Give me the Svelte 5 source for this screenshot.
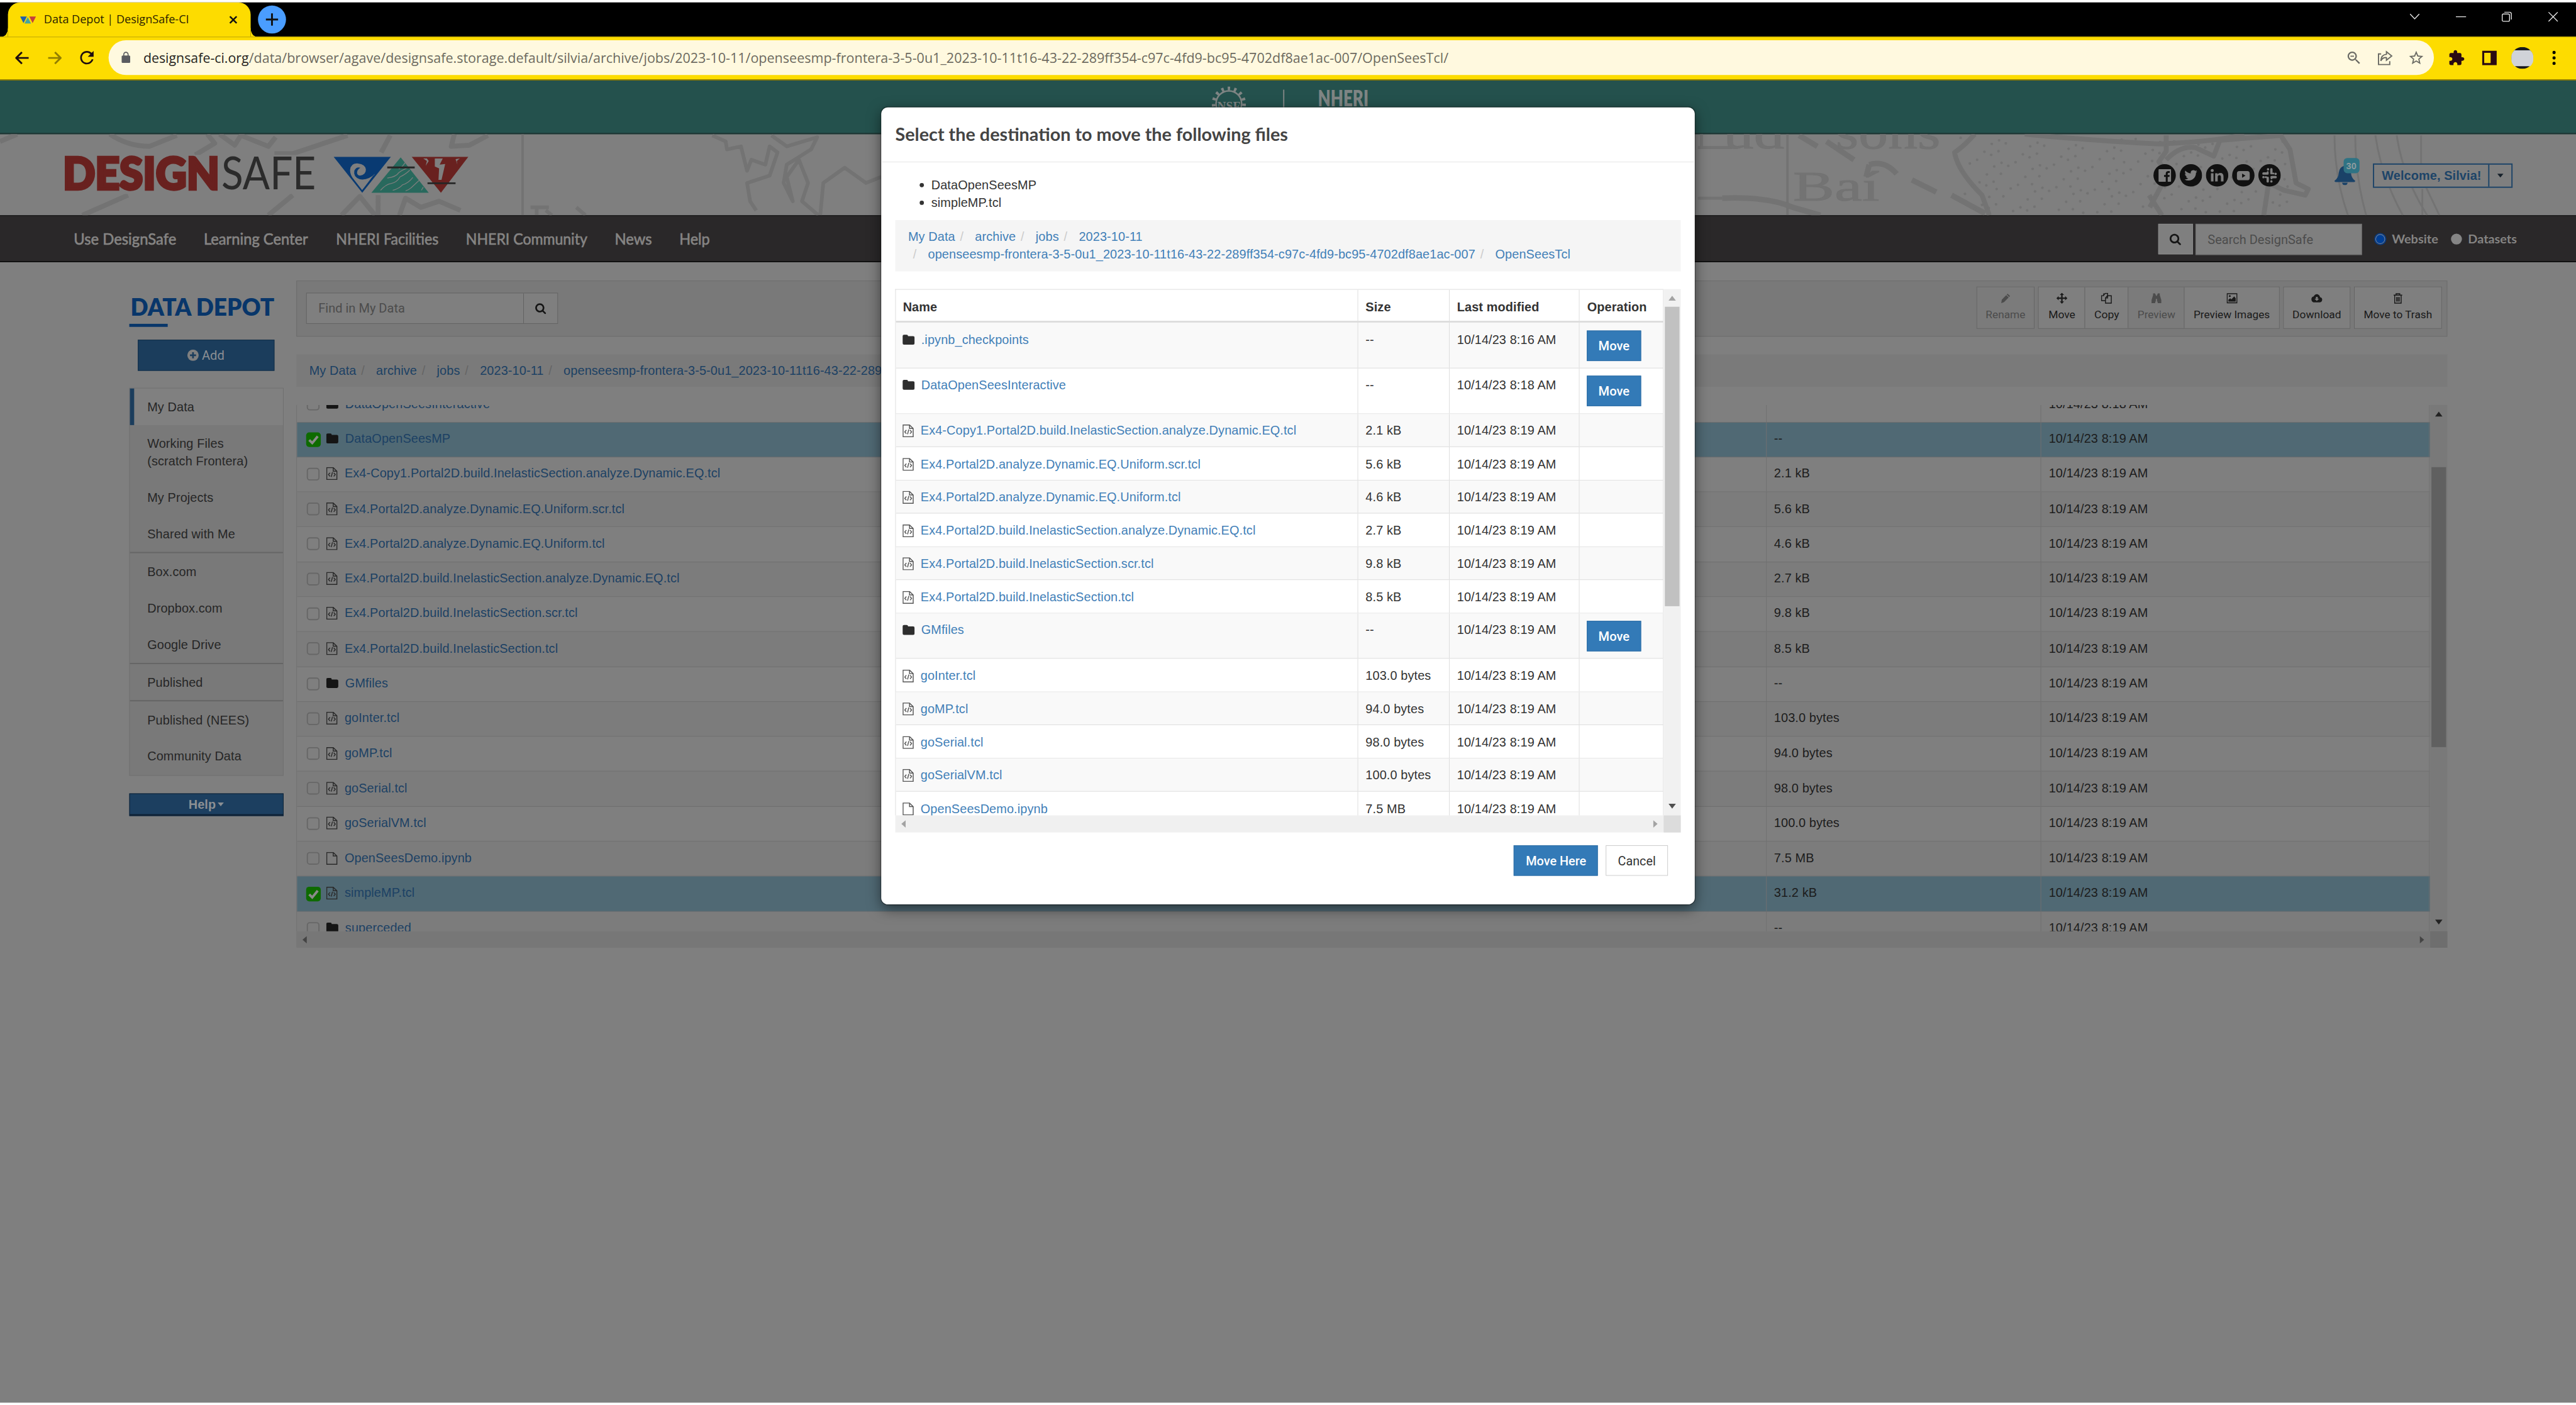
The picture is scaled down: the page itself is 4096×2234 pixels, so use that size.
<script>
  const T19 = '10/14/23 8:19 AM';
  const navItems = [
    ['Use DesignSafe', 168],
    ['Learning Center', 171],
    ['NHERI Facilities', 168],
    ['NHERI Community', 199],
    ['News', 61],
    ['Help', 50]
  ];
  const social = ['facebook', 'twitter', 'linkedin', 'youtube', 'slack'];
  const sideGroups = [
    ['My Data', 'Working Files (scratch Frontera)', 'My Projects', 'Shared with Me'],
    ['Box.com', 'Dropbox.com', 'Google Drive'],
    ['Published'],
    ['Published (NEES)', 'Community Data']
  ];
  const toolGroups = [
    [{ label: 'Rename', icon: 'pencil', w: 93, t: 65, off: true }],
    [
      { label: 'Move', icon: 'arrows', w: 75, t: 44 },
      { label: 'Copy', icon: 'copy', w: 71, t: 41 },
      { label: 'Preview', icon: 'binoculars', w: 92, t: 62, off: true },
      { label: 'Preview Images', icon: 'image', w: 156, t: 125 }
    ],
    [{ label: 'Download', icon: 'cloud', w: 108, t: 80 }],
    [{ label: 'Move to Trash', icon: 'trash', w: 142, t: 112 }]
  ];
  const job = 'openseesmp-frontera-3-5-0u1_2023-10-11t16-43-22-289ff354-c97c-4fd9-bc95-4702df8ae1ac-007';
  const crumbs = ['My Data', 'archive', 'jobs', '2023-10-11'];
  const files = [
    { name: 'DataOpenSeesInteractive', size: '--', date: '10/14/23 8:18 AM', kind: 'dir' },
    { name: 'DataOpenSeesMP', size: '--', date: T19, kind: 'dir', sel: true },
    { name: 'Ex4-Copy1.Portal2D.build.InelasticSection.analyze.Dynamic.EQ.tcl', size: '2.1 kB', date: T19, kind: 'code' },
    { name: 'Ex4.Portal2D.analyze.Dynamic.EQ.Uniform.scr.tcl', size: '5.6 kB', date: T19, kind: 'code' },
    { name: 'Ex4.Portal2D.analyze.Dynamic.EQ.Uniform.tcl', size: '4.6 kB', date: T19, kind: 'code' },
    { name: 'Ex4.Portal2D.build.InelasticSection.analyze.Dynamic.EQ.tcl', size: '2.7 kB', date: T19, kind: 'code' },
    { name: 'Ex4.Portal2D.build.InelasticSection.scr.tcl', size: '9.8 kB', date: T19, kind: 'code' },
    { name: 'Ex4.Portal2D.build.InelasticSection.tcl', size: '8.5 kB', date: T19, kind: 'code' },
    { name: 'GMfiles', size: '--', date: T19, kind: 'dir' },
    { name: 'goInter.tcl', size: '103.0 bytes', date: T19, kind: 'code' },
    { name: 'goMP.tcl', size: '94.0 bytes', date: T19, kind: 'code' },
    { name: 'goSerial.tcl', size: '98.0 bytes', date: T19, kind: 'code' },
    { name: 'goSerialVM.tcl', size: '100.0 bytes', date: T19, kind: 'code' },
    { name: 'OpenSeesDemo.ipynb', size: '7.5 MB', date: T19, kind: 'file' },
    { name: 'simpleMP.tcl', size: '31.2 kB', date: T19, kind: 'code', sel: true },
    { name: 'superceded', size: '--', date: T19, kind: 'dir' }
  ];
  const modalFiles = [
    { name: '.ipynb_checkpoints', size: '--', date: '10/14/23 8:16 AM', kind: 'dir' },
    ...files.slice(0, 14).filter((f) => !f.sel)
  ];
  const dots = Array.from({ length: 190 }, (_, i) => ({
    x: 3215 + ((i * 67) % 540),
    y: 226 + ((i * 41 + Math.floor(i / 9) * 7) % 124)
  }));
</script>

{#snippet fit(text, w, size, cls = '')}
  <svg class="fit {cls}" width={w} height={size * 1.4}>
    <text x="0" y={size * 1.05} font-size={size} textLength={w} lengthAdjust="spacingAndGlyphs">{text}</text>
  </svg>
{/snippet}

{#snippet fileIcon(kind)}
  {#if kind === 'dir'}
    <svg class="ficon dir" width="20" height="21" viewBox="0 0 20 21">
      <path d="M0 4.2Q0 1.8 2.4 1.8H6.6Q9 1.8 9 4.2H17.3Q19.7 4.2 19.7 6.6V15.7Q19.7 18.1 17.3 18.1H2.4Q0 18.1 0 15.7Z" />
    </svg>
  {:else}
    <svg class="ficon doc" width="20" height="21" viewBox="0 0 20 21">
      <path d="M.8.8H11.4L17.4 6.6V20.2H.8ZM11.4.8V6.6H17.4" />
      {#if kind === 'code'}
        <path d="M6.2 9.2L3.6 12.2 6.2 15.2M12.2 9.2L14.8 12.2 12.2 15.2M10.2 8.2L8.2 16" />
      {/if}
    </svg>
  {/if}
{/snippet}

{#snippet magnifier(s)}
  <svg width={s} height={s} viewBox="0 0 1792 1792" class="mag">
    <path d="M1216 832q0-185-131.5-316.5t-316.5-131.5-316.5 131.5-131.5 316.5 131.5 316.5 316.5 131.5 316.5-131.5 131.5-316.5zm512 832q0 52-38 90t-90 38q-54 0-90-38l-343-342q-179 124-399 124-143 0-273.5-55.5t-225-150-150-225-55.5-273.5 55.5-273.5 150-225 225-150 273.5-55.5 273.5 55.5 225 150 150 225 55.5 273.5q0 220-124 399l343 343q37 37 37 90z" />
  </svg>
{/snippet}

{#snippet crumbList(items)}
  {#each items as c, i}{#if i > 0}<span class="sep">/</span>{/if}<a href="#top">{c}</a>{/each}
{/snippet}

<div class="stage">
  <div class="strip"></div>

  <div class="tabs">
    <div class="tab">
      <svg width="26" height="13" viewBox="0 0 26 13">
        <path d="M0 1H11L5.5 12Z" fill="#1f5fae" /><path d="M12.5 2L18 12.6H7Z" fill="#47a59d" /><path d="M15 1H26L20.5 12Z" fill="#c4403c" />
      </svg>
      <span class="tabtitle">{@render fit('Data Depot | DesignSafe-CI', 238, 19.5)}</span>
      <svg width="13" height="13" viewBox="0 0 13 13" class="x"><path d="M1 1L12 12M12 1L1 12" /></svg>
    </div>
    <div class="newtab">
      <svg width="22" height="22" viewBox="0 0 22 22"><path d="M11 1V21M1 11H21" stroke="#111" stroke-width="3" /></svg>
    </div>
    <div class="winctl">
      <svg width="17" height="17" viewBox="0 0 17 17"><path d="M1 4L8.5 12 16 4" /></svg>
      <svg width="17" height="17" viewBox="0 0 17 17"><path d="M0 8.5H17" /></svg>
      <svg width="17" height="17" viewBox="0 0 17 17"><rect x="1" y="4" width="12" height="12" rx="2" /><path d="M4.5 1H13Q16 1 16 4V13" /></svg>
      <svg width="17" height="17" viewBox="0 0 17 17"><path d="M1 1L16 16M16 1L1 16" /></svg>
    </div>
  </div>

  <div class="urlbar">
    <svg class="arrow" width="23" height="22" viewBox="0 0 23 22"><path d="M22 11H2M11 1.5L1.5 11 11 20.5" /></svg>
    <svg class="arrow faint" width="23" height="22" viewBox="0 0 23 22"><path d="M1 11H21M12 1.5L21.5 11 12 20.5" /></svg>
    <svg class="reload" width="33" height="33" viewBox="0 0 24 24"><path d="M17.65 6.35C16.2 4.9 14.21 4 12 4c-4.42 0-7.99 3.58-7.99 8s3.57 8 7.99 8c3.73 0 6.84-2.55 7.73-6h-2.08c-.82 2.33-3.04 4-5.65 4-3.31 0-6-2.69-6-6s2.69-6 6-6c1.66 0 3.14.69 4.22 1.78L13 11h7V4l-2.35 2.35z" /></svg>
    <div class="pill">
      <svg width="21" height="21" viewBox="0 0 24 24" fill="#5a5b5f"><path d="M18 8h-1V6c0-2.76-2.24-5-5-5S7 3.24 7 6v2H6c-1.1 0-2 .9-2 2v10c0 1.1.9 2 2 2h12c1.1 0 2-.9 2-2V10c0-1.1-.9-2-2-2zM15.1 8H8.9V6c0-1.71 1.39-3.1 3.1-3.1 1.71 0 3.1 1.39 3.1 3.1v2z" /></svg>
      <span class="host">{@render fit('designsafe-ci.org', 173, 22.5)}</span>
      <span class="path">{@render fit('/data/browser/agave/designsafe.storage.default/silvia/archive/jobs/2023-10-11/' + job + '/OpenSeesTcl/', 1967, 22.5)}</span>
      <div class="pillicons">
        <svg width="28" height="28" viewBox="0 0 24 24"><path d="M15.5 14h-.79l-.28-.27C15.41 12.59 16 11.11 16 9.5 16 5.91 13.09 3 9.5 3S3 5.91 3 9.5 5.91 16 9.5 16c1.61 0 3.09-.59 4.23-1.57l.27.28v.79l5 4.99L20.49 19l-4.99-5zm-6 0C7.01 14 5 11.99 5 9.5S7.01 5 9.5 5 14 7.01 14 9.5 11.99 14 9.5 14zM7 8.7h5v1.6H7z" /></svg>
        <svg width="26" height="26" viewBox="0 0 24 24" class="ln"><path d="M6 6H2V22H19V17M14 2.5L22 9 14 15.5V11.5Q8 11 5.5 16.5 6 7 14 6.5Z" /></svg>
        <svg width="28" height="28" viewBox="0 0 24 24"><path d="M22 9.24l-7.19-.62L12 2 9.19 8.63 2 9.24l5.46 4.73L5.82 21 12 17.27 18.18 21l-1.63-7.03L22 9.24zM12 15.4l-3.76 2.27 1-4.28-3.32-2.88 4.38-.38L12 6.1l1.71 4.04 4.38.38-3.32 2.88 1 4.28L12 15.4z" /></svg>
      </div>
    </div>
    <div class="ext">
      <svg width="28" height="28" viewBox="0 0 24 24" fill="#2a0a12"><path d="M20.5 11H19V7c0-1.1-.9-2-2-2h-4V3.5C13 2.12 11.88 1 10.5 1S8 2.12 8 3.5V5H4c-1.1 0-1.99.9-1.99 2v3.8H3.5c1.49 0 2.7 1.21 2.7 2.7s-1.21 2.7-2.7 2.7H2V20c0 1.1.9 2 2 2h3.8v-1.5c0-1.49 1.21-2.7 2.7-2.7 1.49 0 2.7 1.21 2.7 2.7V22H17c1.1 0 2-.9 2-2v-4h1.5c1.38 0 2.5-1.12 2.5-2.5S21.88 11 20.5 11z" /></svg>
      <svg width="24" height="24" viewBox="0 0 24 24" class="side"><path d="M0 0H24V24H0ZM3.5 3.5V20.5H14V3.5Z" fill="#2a0a12" fill-rule="evenodd" /></svg>
      <svg width="36" height="36" viewBox="0 0 36 36" class="avatar"><circle cx="18" cy="18" r="18" fill="#17191c" /><path d="M5 5.5H31A18 18 0 0 1 31 31.5H5A18 18 0 0 1 5 5.5Z" fill="#d0d3d8" /></svg>
      <svg width="6" height="24" viewBox="0 0 6 24"><circle cx="3" cy="3" r="2.6" /><circle cx="3" cy="12" r="2.6" /><circle cx="3" cy="21" r="2.6" /></svg>
    </div>
  </div>

  <div class="teal">
    <svg width="56" height="56" viewBox="0 0 56 56" class="nsf">
      <circle cx="28" cy="29" r="21" fill="none" stroke-width="2.5" />
      <circle cx="28" cy="29" r="25" fill="none" stroke-width="6" stroke-dasharray="4 6.47" />
      <text x="28" y="39" text-anchor="middle">NSF</text>
    </svg>
    <div class="tealline"></div>
    <div class="nheri">{@render fit('NHERI', 83, 37, 'black')}</div>
  </div>

  <div class="header">
    <svg class="map" width="4224" height="133" viewBox="0 220 4224 133">
      <g fill="none" stroke="#737373" stroke-linejoin="round">
        <path stroke-width="8" d="M0 232L28 220M180 220Q210 240 245 240L290 222M340 220L352 235 320 254M360 220L385 238 395 222 440 240 452 225M450 252L480 252 570 222M640 222L625 250M745 220L740 240 770 238 800 222M135 353L210 320M440 353L480 320M560 353L590 322 615 353M620 320V353M655 353L665 325 690 340 720 330 755 345" />
        <path stroke-width="4" d="M857 220V353M2931 220V353" />
        <path stroke-width="6" d="M870 340H900M880 340V353M895 345L905 353M945 340L960 353M1168 222L1190 232 1192 245 1215 240 1225 280 1232 262 1255 270 1262 240 1275 250 1262 288 1225 300 1230 330 1240 345M1265 222L1290 240 1340 225 1330 245 1290 270 1285 300 1300 330 1290 290 1310 262 1325 300 1315 330 1342 353M1345 353L1350 300 1385 275 1420 300 1445 290" />
        <path stroke-width="9" d="M2950 222L2980 240M2995 232L3040 262M3065 270Q3090 262 3110 285M3065 270L3060 290M3135 295L3175 315M3200 320L3255 350M2824 325Q2900 322 2940 340L2985 353" />
        <path stroke-width="8" d="M3320 220Q3450 232 3540 236 3640 232 3680 220M3238 220Q3220 240 3205 250 3210 280 3250 320L3262 353M3552 222V248L3540 265 3550 280M3552 262Q3575 238 3600 242L3630 256 3640 230 3740 222 3755 245 3765 300 3785 310 3780 320 3745 312 3720 300 3712 353M3552 290L3525 340M3524 320L3545 353" />
        <path stroke-width="3" d="M3828 222Q3828 290 3850 353M3862 222Q3862 290 3880 353M3895 222Q3905 290 3940 353M3930 222Q3940 290 3980 353M3970 222V290L4000 353M3972 310V353" />
        <path stroke-width="5" d="M2790 220V242M2784 242H2840M2784 325H2824" />
      </g>
      <g fill="#737373">
        {#each dots as d}<circle cx={d.x} cy={d.y} r="2.2" />{/each}
        <text x="2826" y="243" class="mapt" font-size="74" textLength="100" lengthAdjust="spacingAndGlyphs">ud</text>
        <text x="3010" y="243" class="mapt" font-size="78" textLength="172" lengthAdjust="spacingAndGlyphs">sons</text>
        <text x="2940" y="329" class="mapt" font-size="70" textLength="142" lengthAdjust="spacingAndGlyphs">Baí</text>
      </g>
      <rect x="106" y="254" width="665" height="64" fill="#7f7f7f" />
    </svg>
    <div class="logo">
      {@render fit('DESIGN', 257, 73, 'design')}
      {@render fit('SAFE', 155, 73, 'safe')}
      <svg width="222" height="60" viewBox="0 0 222 60" class="tri">
        <path d="M0 0H94L47 59Z" fill="#093a72" />
        <path d="M47 55L33 37Q27 30 27 22 28 10 40 11 52 12 53 21 53 30 43 31 37 30 39 23 41 19 44 18 37 16 34 23 32 33 43 37 57 39 68 28Z" fill="#7f7f7f" />
        <path d="M47 56L66 31" stroke="#093a72" stroke-width="1.6" />
        <path d="M110 1L156 59H62Z" fill="#28695d" />
        <g fill="none" stroke="#7f7f7f" stroke-width="1.3">
          <path d="M107 20Q113 17 117 10M88 35Q103 33 107 26 112 22 122 18M77 55Q86 45 94 44 104 42 109 33 118 29 125 22M97 55Q108 52 113 46 122 44 130 34M118 56Q124 54 127 51L140 39M144 55L147 50" />
        </g>
        <path d="M128 0H221L176 59Z" fill="#69211f" />
        <path d="M166 3H179L174 13 183 12 177 38 172 38 173 19 166 16ZM147 3L153 7 151 15 156 7 153 3ZM207 3L200 4 203 13 202 7Z" fill="#7f7f7f" />
        <path d="M88 17.5H133M154 43.5H200" stroke="#262626" stroke-width="3" />
      </svg>
    </div>
    <div class="social">
      {#each social as s}
        <svg width="37" height="37" viewBox="0 0 37 37">
          <circle cx="18.5" cy="18.5" r="18.4" fill="#111" />
          {#if s === 'facebook'}
            <path d="M8.5 9.5Q8.5 8.5 9.5 8.5H28Q29 8.5 29 9.5V28Q29 29 28 29H23.5V21H26.3L26.7 18H23.5V16Q23.5 14.5 25 14.5H26.8V11.6Q20.3 10.6 20.3 15.6V18H17.5V21H20.3V29H9.5Q8.5 29 8.5 28Z" fill="#808080" />
          {:else if s === 'twitter'}
            <svg x="8" y="8" width="21" height="21" viewBox="0 0 24 24"><path fill="#808080" d="M23.953 4.57a10 10 0 01-2.825.775 4.958 4.958 0 002.163-2.723c-.951.555-2.005.959-3.127 1.184a4.92 4.92 0 00-8.384 4.482C7.69 8.095 4.067 6.13 1.64 3.162a4.822 4.822 0 00-.666 2.475c0 1.71.87 3.213 2.188 4.096a4.904 4.904 0 01-2.228-.616v.06a4.923 4.923 0 003.946 4.827 4.996 4.996 0 01-2.212.085 4.936 4.936 0 004.604 3.417 9.867 9.867 0 01-6.102 2.105c-.39 0-.779-.023-1.17-.067a13.995 13.995 0 007.557 2.209c9.053 0 13.998-7.496 13.998-13.985 0-.21 0-.42-.015-.63A9.935 9.935 0 0024 4.59z" /></svg>
          {:else if s === 'linkedin'}
            <g fill="#808080"><circle cx="10.5" cy="10.6" r="2.5" /><path d="M8.4 15H12.6V28.5H8.4ZM15.3 15H19.3V17Q20.8 14.7 23.8 14.7 29 14.7 29 20.5V28.5H24.8V21.3Q24.8 18.3 22.2 18.3 19.5 18.3 19.5 21.5V28.5H15.3Z" /></g>
          {:else if s === 'youtube'}
            <rect x="8" y="11.5" width="21" height="15" rx="4" fill="#808080" /><path d="M16.5 15.5L22 19 16.5 22.5Z" fill="#111" />
          {:else}
            <g fill="none" stroke="#808080" stroke-width="3.8" stroke-linecap="round"><path d="M16 8.5V8.6M21.5 8.5V15M28.5 16V16.1M28.5 21.5H22M21.5 28.5V28.4M15.5 28.5V22.5M8.5 21.5V21.4M8.5 15.5H15" /><path d="M15.5 13.3V15.3H13.5M21.7 23.5V21.7H24M24 15.5H25M12 21.5H13" stroke-width="3" /></g>
          {/if}
        </svg>
      {/each}
    </div>
    <div class="bellwrap">
      <svg width="34" height="34" viewBox="0 0 34 34"><path d="M17 0Q18.5 0 18.5 2Q26 4 27 13 27.5 22 34 26.5Q34 28.5 32 28.5H2Q0 28.5 0 26.5 6.5 22 7 13 8 4 15.5 2 15.5 0 17 0ZM12.5 29.5H21.5Q21 33.5 17 33.5 13 33.5 12.5 29.5Z" fill="#1a4268" /></svg>
      <span class="badge">30</span>
    </div>
    <div class="welcome"><span class="wtxt">Welcome, Silvia!</span><span class="wcaret"><i class="caret"></i></span></div>
  </div>

  <div class="nav">
    <div class="navitems">{#each navItems as [t, w]}{@render fit(t, w, 25.5, 'mid')}{/each}</div>
    <div class="navright">
      <div class="sbtn">{@render magnifier(20)}</div>
      <div class="sinput">{@render fit('Search DesignSafe', 173, 21, 'rob')}</div>
      <span class="radio on"></span>{@render fit('Website', 76, 20, 'bold')}
      <span class="radio two"></span>{@render fit('Datasets', 80, 20, 'bold')}
    </div>
  </div>

  <div class="main">
    <div class="sidebar">
      <div class="dd">{@render fit('DATA DEPOT', 236, 38.5, 'black')}</div>
      <div class="underline"></div>
      <div class="add">
        <svg width="19" height="19" viewBox="0 0 19 19"><circle cx="9.5" cy="9.5" r="9.3" fill="#808080" /><path d="M9.5 4.5V14.5M4.5 9.5H14.5" stroke="#1c3d5c" stroke-width="2.8" /></svg>
        {@render fit('Add', 37, 21, 'rob')}
      </div>
      <div class="sidelist">
        {#each sideGroups as g, gi}
          <div class="sgroup">
            {#each g as it, ii}<div class="sitem" class:active={gi === 0 && ii === 0}>{it}</div>{/each}
          </div>
        {/each}
      </div>
      <div class="help">Help<i class="caret light"></i></div>
    </div>

    <div class="content">
      <div class="toolbar">
        <div class="find"><div class="findin">{@render fit('Find in My Data', 142, 21, 'rob')}</div><div class="findbtn">{@render magnifier(19)}</div></div>
        <div class="tools">
          {#each toolGroups as g}
            <div class="tgroup">
              {#each g as b}
                <div class="tbtn" class:off={b.off} style:width="{b.w}px">
                  <svg width="18" height="18" viewBox="0 0 18 18">
                    {#if b.icon === 'pencil'}<path d="M12 1.5L16 5.5 14.5 7 10.5 3ZM9.7 3.8L13.7 7.8 6 15.5 1.5 17 2.5 11.5Z" />
                    {:else if b.icon === 'arrows'}<path d="M9 0L12.5 3.7H10.2V7.8H14.3V5.5L18 9 14.3 12.5V10.2H10.2V14.3H12.5L9 18 5.5 14.3H7.8V10.2H3.7V12.5L0 9 3.7 5.5V7.8H7.8V3.7H5.5Z" />
                    {:else if b.icon === 'copy'}<path class="o" d="M4 4.5L7 1H11V5M7.5 13H1V4.8H4.5V1.2M10.5 5H17V17H7.5V8.5ZM7.5 8.7H11V5" />
                    {:else if b.icon === 'binoculars'}<path d="M3.5 1H7V3H8V14.5H7V17H1V12L3.5 4ZM14.5 1H11V3H10V14.5H11V17H17V12L14.5 4ZM8 5H10V10H8Z" />
                    {:else if b.icon === 'image'}<path class="o" d="M1 1.5H17V16.5H1Z" /><path d="M3 14.5V11.5L6 9 8 11 12.5 6 15 9V14.5Z" /><circle cx="5.3" cy="5.5" r="1.6" />
                    {:else if b.icon === 'cloud'}<path fill-rule="evenodd" transform="scale(.75)" d="M19.35 10.04C18.67 6.59 15.64 3 12 3 8.5 3 6 5.64 5.35 8.04 2.34 8.36 0 10.91 0 14c0 3.31 2.69 7 6 7h13c2.76 0 5-3.24 5-6 0-2.64-2.05-4.78-4.65-4.96zM17 13l-5 5-5-5h3V9h4v4h3z" />
                    {:else}<path class="o" d="M2 4H16M6 4V1.5H12V4M3.7 4V17H14.3V4" /><path class="o" d="M6.8 7V14.5M9 7V14.5M11.2 7V14.5" />{/if}
                  </svg>
                  {@render fit(b.label, b.t, 17.8, 'rob')}
                </div>
              {/each}
            </div>
          {/each}
        </div>
      </div>

      <div class="crumb dim">{@render crumbList([...crumbs, job, 'OpenSeesTcl'])}</div>

      <div class="scrollbox">
        <div class="rows">
          <div class="rowsin">
            {#each files as f, i}
              <div class="row" class:alt={i % 2 === 1} class:sel={f.sel}>
                <div class="c name">
                  <span class="cb">{#if f.sel}<svg width="24" height="24" viewBox="0 0 24 24"><path d="M5 12.5L10 17.5 19 6.5" fill="none" stroke="#8a8a8a" stroke-width="4" /></svg>{/if}</span>
                  {@render fileIcon(f.kind)}<a href="#top">{f.name}</a>
                </div>
                <div class="c size">{f.size}</div>
                <div class="c date">{f.date}</div>
              </div>
            {/each}
          </div>
        </div>
        <div class="vbar"><i class="up"></i><div class="thumb"></div><i class="down"></i></div>
      </div>
      <div class="hbar"><i class="left"></i><i class="right"></i><div class="corner"></div></div>
    </div>
  </div>
  <div class="foot"></div>

  <div class="modal">
    <div class="mhead">{@render fit('Select the destination to move the following files', 644, 28.5, 'heavy')}</div>
    <div class="mbody">
      <ul><li>DataOpenSeesMP</li><li>simpleMP.tcl</li></ul>
      <div class="crumb">
        <div>{@render crumbList(crumbs)}</div>
        <div><span class="sep">/</span>{@render crumbList([job, 'OpenSeesTcl'])}</div>
      </div>
      <div class="mbox">
        <div class="mrows">
          <div class="mrow th"><div>Name</div><div>Size</div><div>Last modified</div><div>Operation</div></div>
          {#each modalFiles as f, i}
            <div class="mrow" class:alt={i % 2 === 0} class:tall={f.kind === 'dir'}>
              <div class="mname">{@render fileIcon(f.kind)}<a href="#top">{f.name}</a></div>
              <div>{f.size}</div>
              <div>{f.date}</div>
              <div class="op">{#if f.kind === 'dir'}<span class="btn small">{@render fit('Move', 51, 20.5, 'med')}</span>{/if}</div>
            </div>
          {/each}
        </div>
        <div class="vbar m"><i class="up"></i><div class="thumb"></div><i class="down"></i></div>
      </div>
      <div class="hbar m"><i class="left"></i><i class="right"></i><div class="corner"></div></div>
      <div class="mfoot">
        <span class="btn here">{@render fit('Move Here', 99, 20.5, 'med')}</span>
        <span class="btn cancel">{@render fit('Cancel', 62, 20.5, 'rob')}</span>
      </div>
    </div>
  </div>
</div>

<style>
  :global(body) { margin: 0; overflow: hidden; background: #7f7f7f; }
  .stage {
    position: relative; width: 4224px; height: 2304px; overflow: hidden;
    transform: scale(0.969697); transform-origin: 0 0;
    background: #7f7f7f; color: #1c1c1c; display: flex; flex-direction: column;
    font: 20.5px/29.3px "Liberation Sans", Arial, sans-serif; letter-spacing: 0.12px;
  }
  .stage * { box-sizing: border-box; }
  svg { display: block; flex: none; }
  a { text-decoration: none; color: #1c4164; }
  .fit { overflow: visible; letter-spacing: 0; }
  .fit text { font-family: Lato, sans-serif; fill: currentColor; white-space: pre; }
  .fit.rob text { font-family: Roboto, sans-serif; }
  .fit.med text { font-family: Roboto, sans-serif; font-weight: 500; }
  .fit.bold text, .fit.heavy text { font-weight: 700; }
  .fit.black text { font-weight: 800; }
  .fit.mid text { stroke: currentColor; stroke-width: 0.7px; }

  .strip { height: 4px; background: #fff; flex: none; }
  .tabs { height: 56px; background: #000; display: flex; padding-left: 13px; flex: none; }
  .tab {
    width: 398px; background: #fddc00; border-radius: 20px 20px 0 0; display: flex; align-items: center;
    padding: 0 22px 0 20px; position: relative; color: #2c2300;
  }
  .tab::before, .tab::after {
    content: ""; position: absolute; bottom: 0; width: 9px; height: 14px;
  }
  .tab::before { left: -9px; background: radial-gradient(ellipse 9px 14px at 0 0, #000 96%, #fddc00 100%); }
  .tab::after { right: -9px; background: radial-gradient(ellipse 9px 14px at 100% 0, #000 96%, #fddc00 100%); }
  .tabtitle { margin-left: 13px; }
  .tabtitle :global(text), .host :global(text), .path :global(text) { font-family: "Open Sans", "Noto Sans", sans-serif; }
  .x { margin-left: auto; stroke: #111; stroke-width: 2.6; }
  .newtab {
    width: 46px; height: 46px; border-radius: 50%; background: #4a9dff; margin: 5px 0 0 12px;
    display: flex; align-items: center; justify-content: center;
  }
  .winctl { margin: 15px 29px 0 auto; display: flex; gap: 58.7px; }
  .winctl svg { fill: none; stroke: #e8e8e8; stroke-width: 1.4; }

  .urlbar {
    height: 71.5px; background: #fddc00; border-bottom: 2px solid #8f7c00; display: flex; align-items: center;
    flex: none; padding-left: 25px; box-shadow: inset 0 1px #b89f00;
  }
  .arrow { fill: none; stroke: #1d0d10; stroke-width: 3; margin-right: 30px; }
  .arrow.faint { stroke: #937f00; }
  .reload { fill: #1d0d10; margin: 0 19px 0 -5px; }
  .pill {
    width: 3813px; height: 57px; border-radius: 29px; background: #fff9df; display: flex; align-items: center;
    padding: 0 15px 0 18px; color: #6d6a60;
  }
  .host { color: #26241e; margin-left: 18px; }
  .pillicons { margin-left: auto; display: flex; gap: 24px; align-items: center; fill: #6a6a64; }
  .ln { fill: none; stroke: #6a6a64; stroke-width: 1.8; }
  .ext { display: flex; align-items: center; margin-left: 23px; }
  .side { margin-left: 28px; }
  .avatar { margin: 0 31px 0 24px; }

  .teal {
    height: 88.5px; background: #24514d; display: flex; flex: none; border-bottom: 2px solid #1c3331;
    padding-left: 1987px;
  }
  .nsf { margin-top: 9px; stroke: #7f8584; }
  .nsf text { font: 700 20px "Liberation Serif", serif; stroke: none; fill: #7f8584; }
  .tealline { width: 1.5px; height: 60px; background: #7f8584; margin: 15px 0 0 61px; }
  .nheri { margin: 3px 0 0 55px; color: #7f8584; }

  .header { height: 133px; position: relative; display: flex; align-items: flex-start; flex: none; padding-left: 103px; }
  .map { position: absolute; left: 0; top: 0; }
  .mapt { font-family: "Liberation Serif", serif; stroke: #737373; stroke-width: 1px; }
  .logo { position: relative; display: flex; margin-top: 37px; width: 3428px; }
  .logo :global(.fit) { margin-top: -23px; }
  .design { color: #69211f; }
  .design text { font-weight: 900; stroke: currentColor; stroke-width: 4.5px; }
  .safe { color: #2b2b2b; margin-left: 3px; }
  .tri { margin-left: 29px; }
  .social { position: relative; display: flex; gap: 5.9px; margin: 49px 88px 0 0; }
  .bellwrap { position: relative; margin: 50px 29px 0 0; }
  .badge {
    position: absolute; left: 15px; top: -11px; width: 26px; height: 25px; border-radius: 6px; background: #2f7384;
    color: #8d9b9f; font: 700 15px/25px "Liberation Sans", sans-serif; text-align: center;
  }
  .welcome {
    position: relative; display: flex; width: 229px; height: 39.5px; margin-top: 48px; border: 2px solid #1d4468;
    background: #7f7f7f; color: #1d4468; font-weight: 700;
  }
  .wtxt { width: 189px; padding: 2.5px 0 0 13px; border-right: 2px solid #1d4468; white-space: nowrap; }
  .wcaret { flex: 1; display: flex; align-items: center; justify-content: center; }
  .caret { border: 5.5px solid transparent; border-top: 6px solid #16202a; border-bottom: 0; }
  .caret.light { border-top-color: #8a8f94; border-left-width: 5px; border-right-width: 5px; margin-left: 3px; }

  .nav {
    height: 77px; background: #2a2829; border: 1.5px solid #101010; border-width: 1.5px 0 2px; display: flex; align-items: center;
    flex: none; padding: 2px 97px 0 121px; color: #858483;
  }
  .navitems { display: flex; gap: 45.3px; }
  .navright { margin-left: auto; display: flex; align-items: center; }
  .sbtn { width: 57px; height: 50px; background: #7f7f7f; display: flex; align-items: center; justify-content: center; border: 1px solid #8a8a8a; }
  .mag { fill: #151515; }
  .sinput { width: 273px; height: 51px; margin-left: 4.5px; background: #7f7f7f; border: 1px solid #6c6c6c; padding: 10px 0 0 19px; color: #4c4c4c; }
  .radio { width: 18px; height: 18px; border-radius: 50%; background: #858585; margin: 0 10.5px 0 20.5px; }
  .radio.on { background: #003f95; border: 2.5px solid #7f8a9a; outline: 2px solid #0a3a7d; outline-offset: -1px; }

  .main { display: flex; padding-left: 211.5px; }
  .sidebar { width: 253px; padding-top: 47px; }
  .dd { padding-left: 2px; color: #08366a; }
  .underline { width: 63px; height: 5px; background: #08366a; }
  .add {
    display: flex; align-items: center; justify-content: center; gap: 5px; width: 224px; height: 51px; margin: 21px 0 0 14px;
    background: #1b3d5c; border: 1px solid #142f48; color: #8b8f93;
  }
  .sidelist { margin-top: 28px; background: #797979; border: 1px solid #707070; height: 636px; }
  .sgroup { border-bottom: 2.5px solid #656565; }
  .sgroup:last-child { border: 0; }
  .sitem { padding: 15.2px 20px 15.3px 29px; color: #262626; width: 240px; }
  .sitem.active { background: #808080; border-left: 7px solid #1b3d5c; padding-left: 22px; width: 251px; }
  .help {
    margin-top: 29px; height: 37.5px; background: #1c3f60; border: 1.5px solid #0e2236; border-bottom-width: 3px; color: #8b8f93;
    font-weight: 700; display: flex; align-items: center; justify-content: center;
  }

  .content { width: 3527px; margin-left: 21.5px; padding-top: 30px; }
  .toolbar { height: 92px; background: #797979; border: 1.5px solid #6c6c6c; display: flex; align-items: center; padding: 0 8px 0 14.5px; }
  .find { display: flex; width: 413px; height: 51px; background: #7f7f7f; border: 1.5px solid #626262; margin-bottom: 1px; }
  .findin { width: 356px; padding: 10px 0 0 19px; border-right: 1.5px solid #626262; color: #4c4c4c; }
  .findbtn { flex: 1; display: flex; align-items: center; justify-content: center; }
  .tools { margin-left: auto; display: flex; gap: 6px; margin-bottom: 3px; }
  .tgroup { display: flex; border: 1.5px solid #646464; }
  .tbtn { height: 67px; background: #7f7f7f; color: #1a1a1a; fill: #1a1a1a; display: flex; flex-direction: column; align-items: center; padding-top: 9px; gap: 5px; }
  .tbtn + .tbtn { border-left: 1.5px solid #646464; }
  .tbtn.off { color: #4c4c4c; fill: #4c4c4c; background: #7b7b7b; }
  .tbtn .o { fill: none; stroke: #1a1a1a; stroke-width: 1.5; }

  .crumb { background: #f5f5f5; padding: 12px 21px 13.4px; }
  .crumb a { color: #4280b8; }
  .crumb.dim { background: #7a7a7a; margin-top: 29px; height: 53px; padding-top: 11.5px; white-space: nowrap; overflow: hidden; }
  .crumb.dim a { color: #1c4164; }
  .sep { display: inline-block; width: 32.6px; padding-left: 8px; color: #ccc; }
  .dim .sep { color: #656565; }

  .scrollbox { display: flex; height: 863px; margin-top: 30px; }
  .rows { flex: 1; overflow: hidden; border-left: 1.5px solid #6f6f6f; }
  .rowsin { margin-top: -28.8px; }
  .row { display: flex; height: 57.3px; border-bottom: 1.5px solid #6e6e6e; background: #7c7c7c; }
  .row:nth-child(odd) { background: #7f7f7f; }
  .row.sel { background: #506974; }
  .c { padding: 11.5px 0 0 12px; }
  .name { width: 2409px; padding-left: 15px; display: flex; }
  .size { width: 450px; border-left: 1.5px solid #707070; }
  .date { width: 638px; border-left: 1.5px solid #707070; border-right: 1.5px solid #707070; padding-left: 12.5px; }
  .cb { width: 21px; height: 21px; border: 2px solid #676767; border-radius: 5px; margin: 5.5px 11px 0 1px; flex: none; }
  .sel .cb { width: 24px; height: 24px; background: #0e6b00; border: 0; margin: 5px 9px 0 0; }
  .ficon { margin: 5px 10px 0 0; }
  .dir { fill: #151515; margin-right: 11px; }
  .doc { fill: none; stroke: #2a2a2a; stroke-width: 1.5; }
  .vbar { width: 28.5px; background: #797979; display: flex; flex-direction: column; align-items: center; }
  .vbar i, .hbar i { border: 6px solid transparent; }
  .up { border-bottom: 8px solid #222 !important; border-top: 0 !important; margin-top: 11px; }
  .down { border-top: 8px solid #222 !important; border-bottom: 0 !important; margin: auto 0 11px; }
  .thumb { width: 24px; height: 459px; background: #606060; margin-top: 83px; }
  .hbar { height: 27px; background: #777; display: flex; align-items: center; }
  .left { border-right: 7px solid #444 !important; border-left: 0 !important; margin-left: 10px; }
  .right { border-left: 7px solid #444 !important; border-right: 0 !important; margin: 0 10px 0 auto; }
  .corner { width: 28.5px; height: 100%; background: #6e6e6e; }
  .foot { height: 4px; background: #fff; margin-top: auto; flex: none; }

  .modal {
    position: absolute; left: 1445px; top: 176px; width: 1334px; height: 1307px; background: #fff; border-radius: 11px;
    box-shadow: 0 0 0 1.5px rgba(0, 0, 0, 0.3), 0 7px 22px rgba(0, 0, 0, 0.5); color: #333;
  }
  .mhead { height: 90px; border-bottom: 1.5px solid #e5e5e5; padding: 25px 0 0 23px; color: #444; }
  .mbody { padding: 0 23px; }
  ul { margin: 0; padding: 21.5px 0 0 59px; list-style: none; height: 95px; }
  li { position: relative; }
  li::before { content: ""; position: absolute; left: -19px; top: 12.5px; width: 7px; height: 7px; border-radius: 50%; background: #333; }
  .mbox { display: flex; height: 863px; margin-top: 29.5px; }
  .mrows { flex: 1; overflow: hidden; border-left: 1.5px solid #ddd; border-top: 1.5px solid #ddd; }
  .mrow { display: flex; height: 54.5px; border-bottom: 1.5px solid #ddd; }
  .mrow.alt { background: #f9f9f9; }
  .mrow.tall { height: 74.6px; }
  .mrow.th { height: 54px; font-weight: 700; border-bottom-width: 3px; }
  .mrow > div { padding: 12.4px 0 0 12.5px; }
  .mrow > div:nth-child(1) { width: 757px; padding-left: 10.5px; }
  .mrow.th > div:nth-child(1) { padding-left: 11.5px; }
  .mrow > div:nth-child(2) { width: 150px; border-left: 1.5px solid #ddd; }
  .mrow > div:nth-child(3) { width: 213.5px; border-left: 1.5px solid #ddd; }
  .mrow > div:nth-child(4) { width: 138.5px; border-left: 1.5px solid #ddd; border-right: 1.5px solid #ddd; }
  .mname { display: flex; }
  .modal a { color: #4280b8; }
  .modal .dir { fill: #2e2e2e; }
  .modal .doc { stroke: #555; }
  .mrow .ficon { margin-top: 5px; }
  .btn {
    display: flex; align-items: center; justify-content: center; background: #337ab7; border: 1.5px solid #2e6da4; color: #fff;
    height: 50px;
  }
  .small { width: 89px; margin-left: -1px; }
  .vbar.m { background: #f1f1f1; }
  .m .thumb { background: #c1c1c1; height: 491px; margin-top: 10px; }
  .m .up { border-bottom-color: #a3a3a3 !important; }
  .m .down { border-top-color: #505050 !important; }
  .hbar.m { height: 28px; background: #f0f0f0; }
  .m .left { border-right-color: #a3a3a3 !important; }
  .m .right { border-left-color: #a3a3a3 !important; }
  .m .corner { background: #dcdcdc; }
  .mfoot { display: flex; gap: 13px; justify-content: flex-end; padding: 21px 21px 0 0; }
  .here { width: 138px; }
  .cancel { width: 102px; background: #fff; border-color: #ccc; color: #333; }
</style>
